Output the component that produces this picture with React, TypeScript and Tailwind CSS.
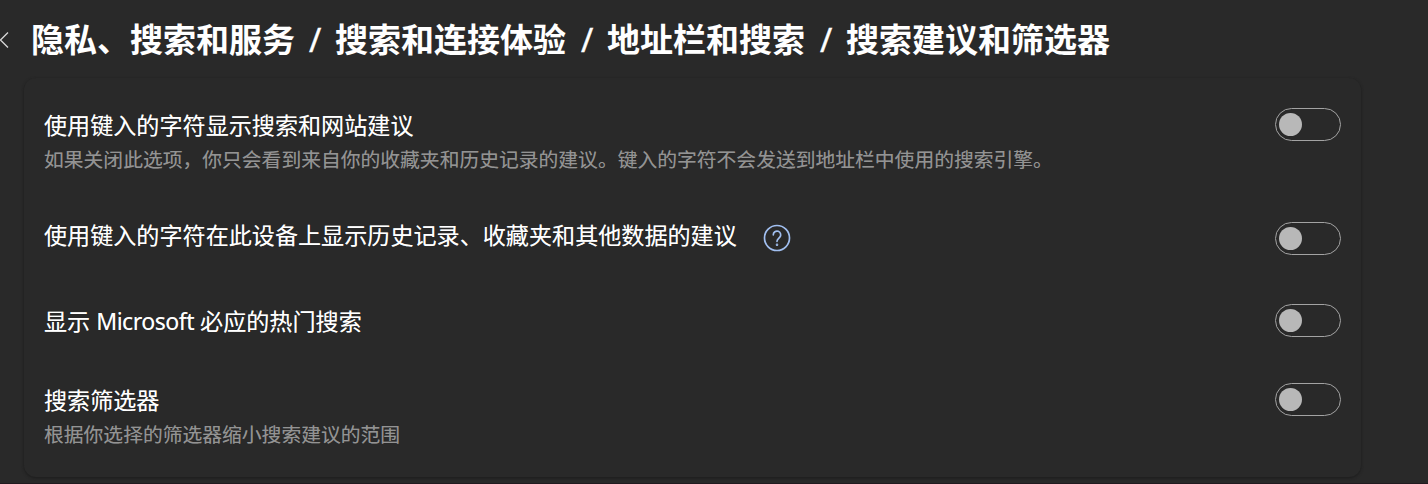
import React from "react";

const Toggle = () => (
  <button role="switch" aria-checked="false" className="flex h-[33px] w-[66px] shrink-0 items-center rounded-full border border-[#a3a3a3] pl-[3px]">
    <span className="size-[23px] rounded-full bg-[#b8b8b8]" />
  </button>
);

const title = "text-[23.1px] leading-[34px] text-white whitespace-nowrap [text-shadow:0_0_0.5px_#ffffff80]";
const desc = "mt-[3px] text-[19.8px] leading-[30px] text-[#939393] whitespace-nowrap [text-shadow:0_0_0.5px_#93939380]";
const slash = "w-[27px] pl-px font-normal [-webkit-text-stroke:0.4px_white]";

export default function App() {
  return (
    <main className="h-[484px] w-[1428px] overflow-hidden border-b border-[#211a1f] bg-[#292929] font-['Noto_Sans','Noto_Sans_CJK_SC',sans-serif]">
      <header className="flex h-[78px] items-start">
        <svg className="mt-[31px] h-[18px] w-[10px] shrink-0" viewBox="0 0 10 18" fill="none" stroke="#d6d6d6" strokeWidth="1.3">
          <path d="M8 1.5.5 9 8 16.5" />
        </svg>
        <h1 className="ml-[21px] mt-[16px] flex text-[33px] font-bold leading-[48px] text-white whitespace-nowrap">
          <span className="w-[277px]">隐私、搜索和服务</span>
          <span className={slash}>/</span>
          <span className="w-[245px]">搜索和连接体验</span>
          <span className={slash}>/</span>
          <span className="w-[212px]">地址栏和搜索</span>
          <span className={slash}>/</span>
          <span>搜索建议和筛选器</span>
        </h1>
      </header>
      <section className="ml-[24px] flex h-[399px] w-[1337px] flex-col rounded-[12px] bg-[#292929] pl-[20px] pr-[20px] shadow-[0_1px_3px_#1c1c1c]">
        <div className="flex h-[110px] justify-between pt-[30px]">
          <div>
            <p className={title}>使用键入的字符显示搜索和网站建议</p>
            <p className={desc}>如果关闭此选项，你只会看到来自你的收藏夹和历史记录的建议。键入的字符不会发送到地址栏中使用的搜索引擎。</p>
          </div>
          <Toggle />
        </div>
        <div className="flex h-[86px] justify-between pt-[30px]">
          <div className="flex">
            <p className={title}>使用键入的字符在此设备上显示历史记录、收藏夹和其他数据的建议</p>
            <svg className="ml-[26px] mt-[6px] size-7" viewBox="0 0 28 28" fill="none" stroke="#a1bff0" strokeWidth="1.7" strokeLinecap="round">
              <circle cx="14" cy="14" r="12.5" />
              <path d="M10.3 10.8a3.7 3.7 0 1 1 6.5 2.4C15.5 14.6 14 15.4 14 17.3" />
              <circle cx="14" cy="20.7" r=".45" fill="#a1bff0" />
            </svg>
          </div>
          <div className="mt-1"><Toggle /></div>
        </div>
        <div className="flex h-[80px] justify-between pt-[30px]">
          <p className={title}>显示 <span className="tracking-[-0.5px]">Microsoft</span> 必应的热门搜索</p>
          <Toggle />
        </div>
        <div className="flex justify-between pt-[29px]">
          <div>
            <p className={title}>搜索筛选器</p>
            <p className={desc}>根据你选择的筛选器缩小搜索建议的范围</p>
          </div>
          <Toggle />
        </div>
      </section>
    </main>
  );
}
